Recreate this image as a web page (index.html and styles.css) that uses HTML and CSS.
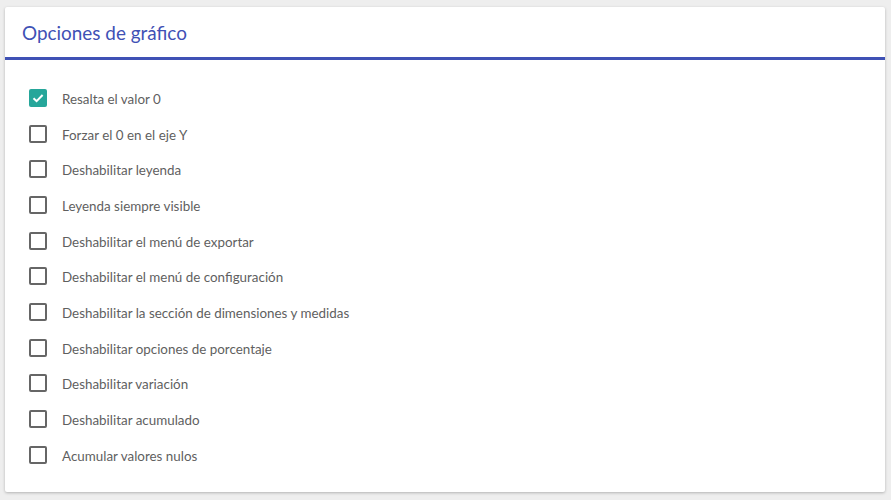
FILE: index.html
```html
<!DOCTYPE html>
<html lang="es">
<head>
<meta charset="utf-8">
<link rel="stylesheet" href="styles.css">
</head>
<body>
<div class="card">
  <div class="card-header"><h2 class="title">Opciones de gráfico</h2></div>
  <ul class="options">
    <li class="option"><span class="box checked"><svg viewBox="0 0 18 18" width="18" height="18"><path d="M4.5 9.2 L7.6 12.2 L13.6 6" fill="none" stroke="#fff" stroke-width="2"/></svg></span><span class="label">Resalta el valor 0</span></li>
    <li class="option"><span class="box"></span><span class="label">Forzar el 0 en el eje Y</span></li>
    <li class="option"><span class="box"></span><span class="label">Deshabilitar leyenda</span></li>
    <li class="option"><span class="box"></span><span class="label">Leyenda siempre visible</span></li>
    <li class="option"><span class="box"></span><span class="label">Deshabilitar el menú de exportar</span></li>
    <li class="option"><span class="box"></span><span class="label">Deshabilitar el menú de configuración</span></li>
    <li class="option"><span class="box"></span><span class="label">Deshabilitar la sección de dimensiones y medidas</span></li>
    <li class="option"><span class="box"></span><span class="label">Deshabilitar opciones de porcentaje</span></li>
    <li class="option"><span class="box"></span><span class="label">Deshabilitar variación</span></li>
    <li class="option"><span class="box"></span><span class="label">Deshabilitar acumulado</span></li>
    <li class="option"><span class="box"></span><span class="label">Acumular valores nulos</span></li>
  </ul>
</div>
</body>
</html>
```
FILE: styles.css
```css
html, body { margin: 0; padding: 0; }
body {
  background: #eeeeee;
  font-family: "Lato", "Open Sans", sans-serif;
  padding: 7px 6px 8px 5px;
  box-sizing: border-box;
  height: 500px;
}
.card {
  background: #fff;
  border-radius: 2px;
  box-shadow: 0 1px 3px rgba(0,0,0,0.25);
  height: 485px;
  box-sizing: border-box;
}
.card-header {
  height: 50px;
  display: flex;
  align-items: center;
  padding: 0 17px;
  border-bottom: 3px solid #3f51b5;
}
.title {
  margin: 0;
  font-weight: 400;
  font-size: 18.9px;
  color: #3f51b5;
}
.options {
  list-style: none;
  margin: 0;
  padding: 20px 0 0 24px;
}
.option {
  display: flex;
  align-items: center;
  height: 35.7px;
}
.box {
  width: 18px;
  height: 18px;
  box-sizing: border-box;
  border: 2px solid #666;
  border-radius: 2px;
  margin-right: 15px;
  display: flex;
}
.box.checked {
  background: #26a69a;
  border: none;
}
.label {
  font-size: 13.4px;
  color: #5f5f5f;
  position: relative;
  top: 1px;
}
```
